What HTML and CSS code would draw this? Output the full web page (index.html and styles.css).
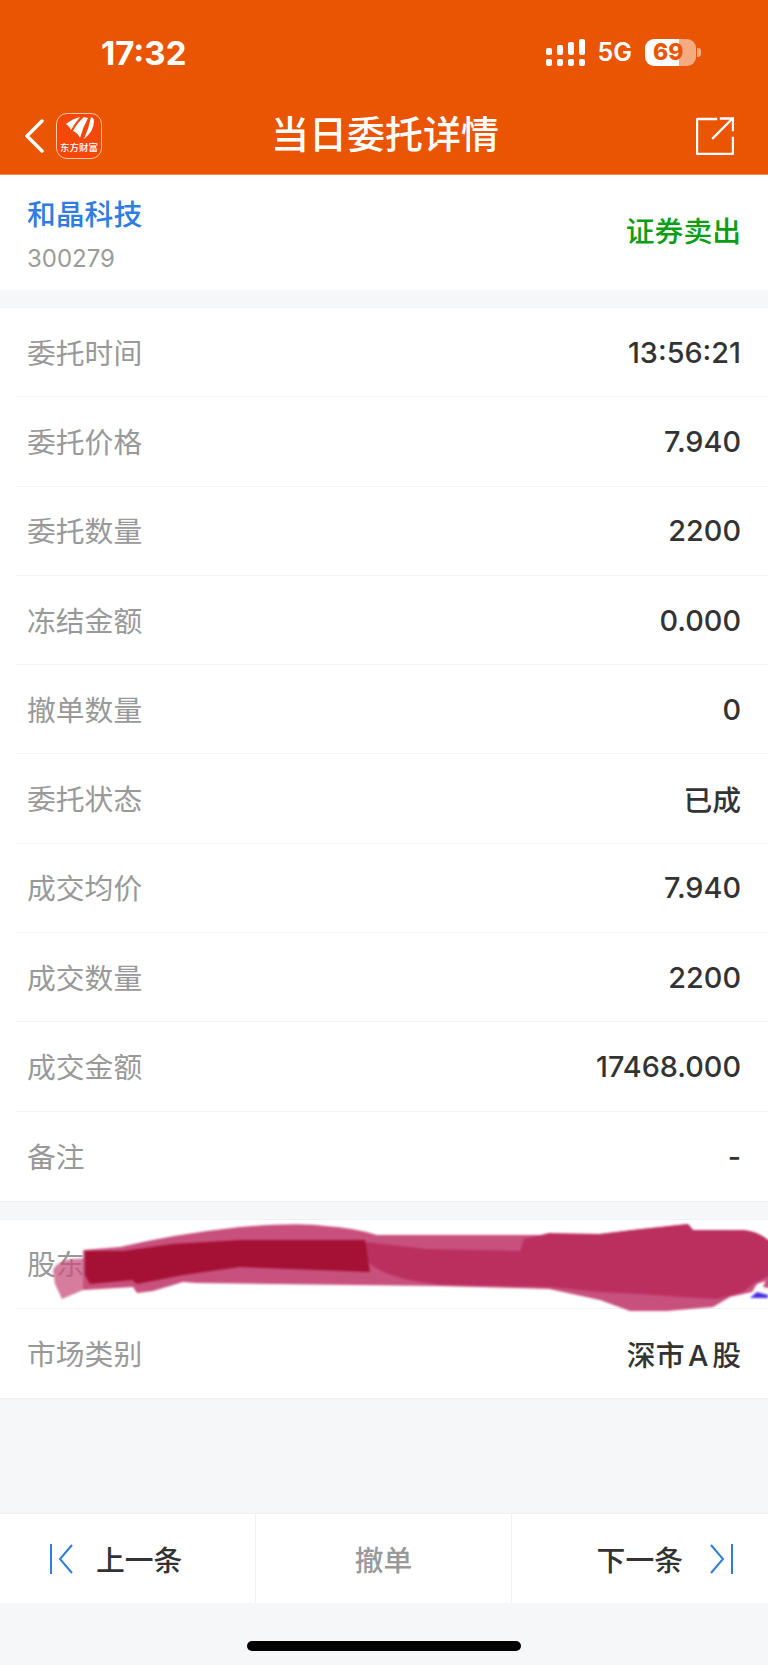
FILE: index.html
```html
<!DOCTYPE html>
<html lang="zh-CN">

<head>
	<meta charset="utf-8" />
	<title>当日委托详情</title>
	<link rel="stylesheet" href="styles.css">
</head>

<body>
	<div class="page">
		<header class="top">
			<div class="status">
				<span class="clock">17:32</span>
				<div class="status_right">
					<svg class="signal" viewBox="0 0 39 27" width="39" height="27" fill="#fff">
						<rect x="0" y="9" width="6" height="7" rx="2" />
						<rect x="11" y="6" width="6" height="10" rx="2" />
						<rect x="22" y="3" width="6" height="13" rx="2" />
						<rect x="33" y="0" width="6" height="16" rx="2" />
						<rect x="0" y="20" width="6" height="7" rx="2" />
						<rect x="11" y="20" width="6" height="7" rx="2" />
						<rect x="22" y="20" width="6" height="7" rx="2" />
						<rect x="33" y="20" width="6" height="7" rx="2" />
					</svg>
					<span class="net">5G</span>
					<div class="battery">
						<span class="battery_level">69</span>
					</div>
					<span class="battery_tip"></span>
				</div>
			</div>
			<nav class="nav">
				<svg class="back" viewBox="0 0 20 34" width="20" height="34" fill="none" stroke="#fff" stroke-width="3.4" stroke-linecap="round" stroke-linejoin="round">
					<path d="M18 2 L3 17 L18 32" />
				</svg>
				<div class="logo">
					<svg class="logo_mark" viewBox="0 0 44 26" width="44" height="26" fill="#fff">
						<path d="M9 9 Q15 4 23 2 Q18 8 14 15 Q12 11 9 9 Z" />
						<path d="M16 16 Q20 8 27 2 L31 3 Q26 12 23 23 Q21 18 16 16 Z" />
						<path d="M27 24 Q32 13 34 2 Q37 3 37 6 Q37 16 27 24 Z" />
					</svg>
					<span class="logo_text">东方财富</span>
				</div>
				<h1 class="title">当日委托详情</h1>
				<svg class="share" viewBox="0 0 38 38" width="38" height="38" fill="none" stroke="#fff" stroke-width="2.4" stroke-linecap="square">
					<path d="M20 2 H2 a1 1 0 0 0 -1 1 V36 a1 1 0 0 0 1 1 H36 a1 1 0 0 0 1 -1 V21" />
					<path d="M17 21 L36 2 M25 1.5 H37 V13" />
				</svg>
			</nav>
		</header>

		<section class="stock">
			<div class="stock_info">
				<div class="stock_name">和晶科技</div>
				<div class="stock_code">300279</div>
			</div>
			<div class="stock_side">证券卖出</div>
		</section>

		<section class="list">
			<div class="row"><span class="label">委托时间</span><span class="value">13:56:21</span></div>
			<div class="row"><span class="label">委托价格</span><span class="value">7.940</span></div>
			<div class="row"><span class="label">委托数量</span><span class="value">2200</span></div>
			<div class="row"><span class="label">冻结金额</span><span class="value">0.000</span></div>
			<div class="row"><span class="label">撤单数量</span><span class="value">0</span></div>
			<div class="row"><span class="label">委托状态</span><span class="value">已成</span></div>
			<div class="row"><span class="label">成交均价</span><span class="value">7.940</span></div>
			<div class="row"><span class="label">成交数量</span><span class="value">2200</span></div>
			<div class="row"><span class="label">成交金额</span><span class="value">17468.000</span></div>
			<div class="row"><span class="label">备注</span><span class="value">-</span></div>
		</section>

		<section class="list list_last">
			<div class="row"><span class="label">股东账号</span></div>
			<div class="row"><span class="label">市场类别</span><span class="value value_market">深市 A 股</span></div>
			<!-- the hand-drawn smear over the account number -->
			<svg class="smear" viewBox="0 1215 768 100" width="768" height="100">
				<path fill="#4a2fe6" d="M750 1296 L757 1290 L768 1293 V1296 Z" />
				<path fill="#c8507c" d="M763 1285 L768 1273 L780 1270 V1288 Z" />
				<path fill="#c8507c" fill-opacity="0.75" d="M53 1268 Q58 1258 73 1257 L90 1256 L90 1287 L83 1288 L62 1297 L55 1282 Z" />
				<path fill="#c8507c" d="M83 1248 L120 1245 Q175 1232 240 1225 Q300 1220 325 1224 Q355 1226 377 1233 L540 1233 L600 1232 L633 1228 L688 1222 L693 1228 L743 1228 Q757 1229 768 1238 L780 1240 V1272 L763 1280 L757 1282 L752 1290 L730 1295 L713 1305 L667 1309 L630 1309 L600 1298 L549 1287 L441 1284 L196 1281 L183 1280 L153 1289 L137 1291 L133 1285 L83 1288 Z" />
				<path fill="#bb2f5f" d="M365 1240 L426 1247 L520 1249 L524 1237 L549 1231 L600 1232 L633 1228 L688 1222 L693 1228 L743 1228 Q757 1229 768 1238 L780 1240 V1268 L753 1282 L743 1290 L717 1297 L683 1295 L640 1292 L600 1290 L549 1285 L441 1283 L421 1280 Q387 1275 370 1262 Q362 1250 365 1240 Z" />
				<path fill="#a51035" d="M85 1249 L123 1249 L173 1242 L240 1238 L365 1238 L370 1270 L240 1265 L183 1273 L137 1282 L132 1278 L90 1282 L85 1273 Z" />
			</svg>
		</section>

		<div class="spacer"></div>

		<footer class="bar">
			<div class="bar_item bar_prev">
				<svg class="arrow" viewBox="0 0 23 30" width="23" height="30" fill="none" stroke="#2f7de1" stroke-width="2">
					<path d="M1 0 V30 M22 1 L10 15 L22 29" />
				</svg>
				<span class="bar_text">上一条</span>
			</div>
			<div class="bar_item bar_off"><span class="bar_text">撤单</span></div>
			<div class="bar_item bar_next">
				<span class="bar_text">下一条</span>
				<svg class="arrow" viewBox="0 0 23 30" width="23" height="30" fill="none" stroke="#2f7de1" stroke-width="2">
					<path d="M22 0 V30 M1 1 L13 15 L1 29" />
				</svg>
			</div>
		</footer>

		<div class="home"><span class="home_bar"></span></div>
	</div>
</body>

</html>
```

FILE: styles.css
```css
* {
	box-sizing: border-box;
}

body {
	margin: 0;
	background: #f6f7f9;
	font-family: "Inter", "Noto Sans CJK SC", sans-serif;
}

.page {
	display: flex;
	flex-direction: column;
	width: 768px;
	height: 1665px;
	overflow: hidden;
}

.top {
	height: 175px;
	background: #ea5504;
	border-bottom: 1px solid #f08a50;
	color: #fff;
}

.status {
	display: flex;
	align-items: center;
	justify-content: space-between;
	height: 104px;
	padding: 0 67px 0 101px;
}

.clock {
	margin-top: 1px;
	font-size: 33px;
	font-weight: 700;
}

.status_right {
	display: flex;
	align-items: center;
}

.signal {
	margin-right: 13px;
}

.net {
	margin-right: 13px;
	font-size: 25px;
	font-weight: 600;
}

.battery {
	width: 51px;
	height: 27px;
	padding-left: 8px;
	border-radius: 9px;
	background: linear-gradient(to right, #fff 34px, #f5ab80 34px);
	color: #ea5504;
	font-size: 23px;
	font-weight: 800;
	line-height: 27px;
}

.battery_tip {
	width: 4px;
	height: 9px;
	margin-left: 1px;
	border-radius: 0 3px 3px 0;
	background: #f5ab80;
}

.nav {
	display: flex;
	align-items: center;
	height: 70px;
	margin-top: -3px;
	padding: 0 34px 0 24px;
}

.logo {
	display: flex;
	flex-direction: column;
	align-items: center;
	width: 46px;
	height: 46px;
	margin: -1px 0 0 12px;
	border: 1px solid #f7c4a6;
	border-radius: 11px;
	background: #f4470a;
}

.logo_mark {
	flex: none;
	margin-top: 1px;
}

.logo_text {
	font-size: 9.5px;
	font-weight: 500;
	line-height: 14px;
	white-space: nowrap;
}

.title {
	flex: 1;
	margin: -5px 0 0;
	padding-right: 28px;
	font-size: 38px;
	font-weight: 500;
	line-height: 50px;
	text-align: center;
}

.stock {
	display: flex;
	align-items: center;
	justify-content: space-between;
	height: 115px;
	padding: 0 27px;
	background: #fff;
}

.stock_info {
	margin-top: 5px;
}

.stock_name {
	color: #2f7de1;
	font-size: 28.8px;
	font-weight: 500;
	line-height: 40px;
}

.stock_code {
	margin-top: 8px;
	color: #9b9b9b;
	font-size: 24px;
	line-height: 32px;
}

.stock_side {
	margin-top: -6px;
	color: #0a9e14;
	font-size: 28.8px;
	font-weight: 500;
}

.list {
	position: relative;
	margin-top: 17px;
	background: #fff;
	border-top: 1px solid #eff0f2;
	border-bottom: 1px solid #eff0f2;
}

.list_last {
	margin-top: 17px;
}

.row {
	display: flex;
	align-items: center;
	justify-content: space-between;
	height: 89.3px;
	margin-left: 16px;
	padding: 0 27px 2px 11px;
	border-bottom: 1px solid #f2f3f5;
	font-size: 28.8px;
}

.list_last .row {
	height: 88.8px;
}

.row:last-child,
.list_last .row:nth-child(2) {
	border-bottom: 0;
}

.label {
	color: #999;
}

.value {
	padding-top: 2px;
	color: #333;
	font-weight: 500;
}

.value_market {
	word-spacing: -4px;
}

.smear {
	position: absolute;
	top: -3px;
	left: 0;
	overflow: visible;
	filter: blur(1px);
}

.spacer {
	flex: 1;
}

.bar {
	display: grid;
	grid-template-columns: repeat(3, 1fr);
	height: 90px;
	background: #fff;
	border-top: 1px solid #f0f1f3;
}

.bar_item {
	display: flex;
	align-items: center;
	justify-content: center;
	border-right: 1px solid #f0f1f3;
	color: #333;
	font-size: 28.8px;
	font-weight: 500;
}

.bar_item:last-child {
	border-right: 0;
}

.bar_prev {
	justify-content: flex-start;
	gap: 23px;
	padding-left: 50px;
}

.bar_next {
	justify-content: flex-end;
	gap: 27px;
	padding-right: 35px;
}

.bar_off {
	color: #999;
}

.home {
	display: flex;
	justify-content: center;
	height: 62px;
	padding-top: 38px;
}

.home_bar {
	width: 274px;
	height: 10px;
	border-radius: 5px;
	background: #000;
}
```
